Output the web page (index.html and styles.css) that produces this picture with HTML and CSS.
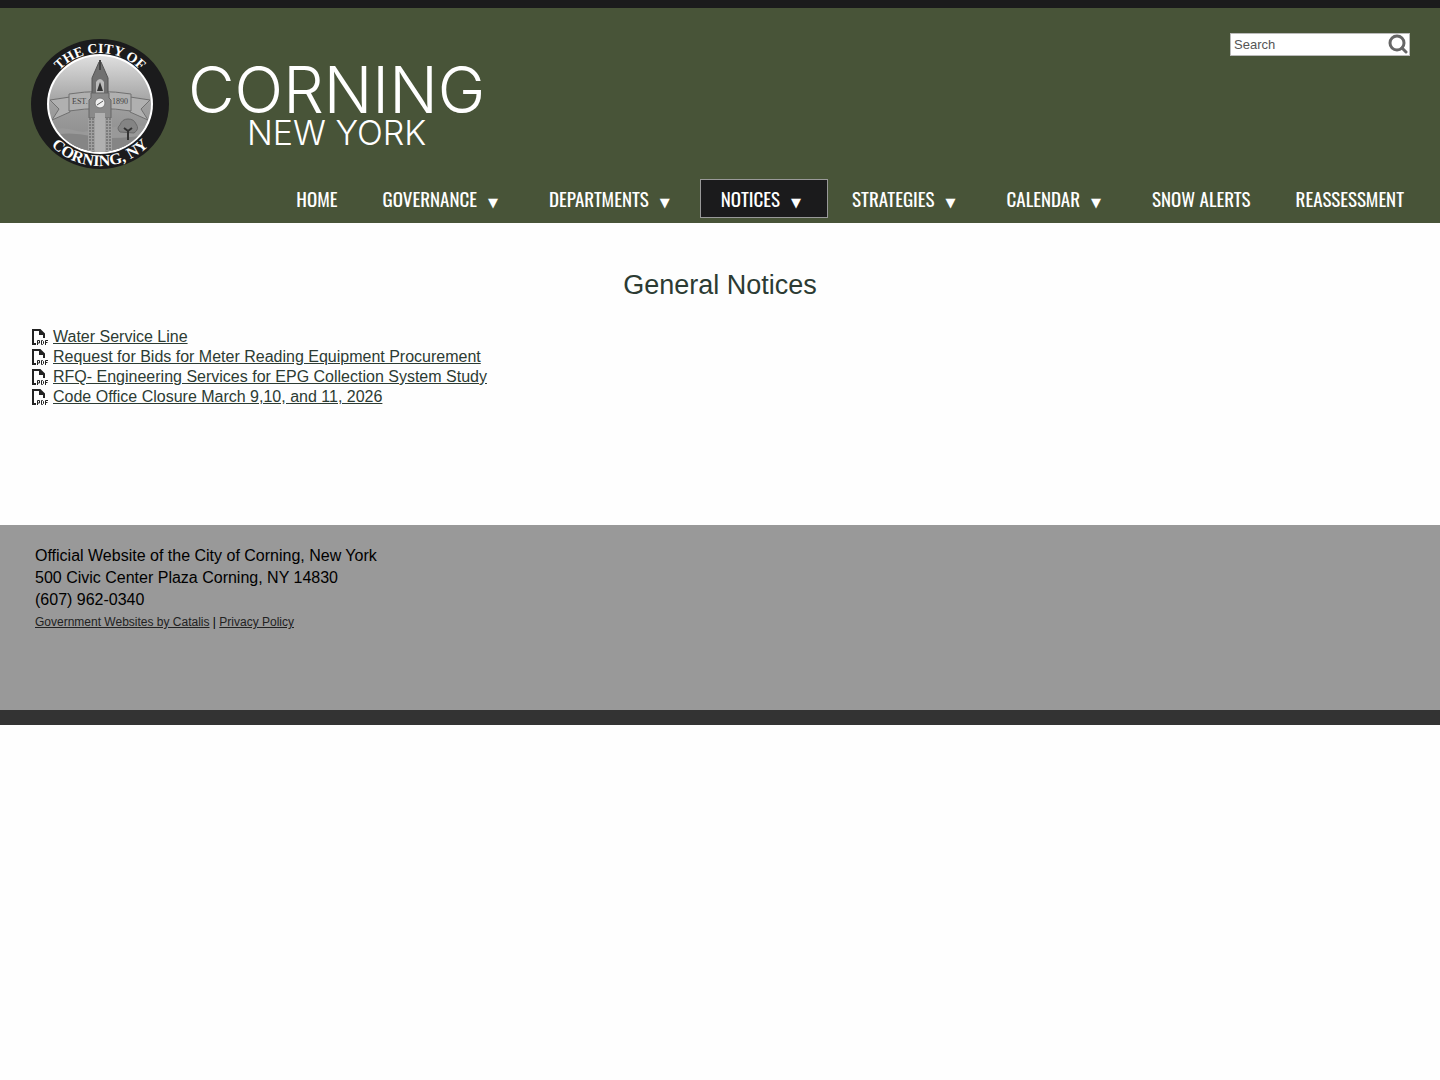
FILE: index.html
```html
<!DOCTYPE html>
<html lang="en">
<head>
  <meta charset="UTF-8">
  <meta name="viewport" content="width=device-width, initial-scale=1.0">
  <title>General Notices - City of Corning, New York</title>
  <link rel="stylesheet" href="styles.css">
</head>
<body>
  <header class="site-header">
    <div class="header-top">
      <a class="brand" href="#">
        <svg class="seal" viewBox="0 0 140 132" role="img" aria-label="Seal of the City of Corning, NY">
          <defs>
            <linearGradient id="sky" x1="0" y1="0" x2="0" y2="1">
              <stop offset="0" stop-color="#e2e2e2"/>
              <stop offset="0.5" stop-color="#a0a0a0"/>
              <stop offset="1" stop-color="#868686"/>
            </linearGradient>
            <clipPath id="disc"><ellipse cx="70" cy="66" rx="51" ry="48"/></clipPath>
            <path id="arcTop" d="M16 66a54 51 0 0 1 108 0"/>
            <path id="arcBottom" d="M4 66a66 62 0 0 0 132 0"/>
          </defs>
          <ellipse cx="70" cy="66" rx="69" ry="65" fill="#1b1b1c"/>
          <ellipse cx="70" cy="66" rx="53" ry="50" fill="#fff"/>
          <g clip-path="url(#disc)">
            <rect x="17" y="15" width="106" height="102" fill="url(#sky)"/>
            <path d="M17 93q14-5 26-1t20-1h14q26-8 46 0v30H17z" fill="#999"/>
            <path d="M17 98q22-5 44 0t62-2v24H17z" fill="#858585"/>
            <!-- ribbon -->
            <g fill="#b0b0b0" stroke="#707070" stroke-width="1">
              <path d="M20 62l20-3v15l-18 8 7-11z"/>
              <path d="M120 62l-20-3v15l18 8-7-11z"/>
              <path d="M39 56q31-5 62 0v17q-31-5-62 0z"/>
            </g>
            <!-- clock tower -->
            <path d="M62 40L69 24h2l7 16v16H62z" fill="#707070" stroke="#555"/>
            <path d="M70 22v10" stroke="#444" stroke-width="2"/>
            <path d="M66 55V44q4-6 8 0v11z" fill="#bbb"/>
            <path d="M67 53l3-9 3 9z" fill="#333"/>
            <path d="M61 55h18v5l2 2v18H59V62l2-2z" fill="#8a8a8a" stroke="#666"/>
            <path d="M58 80h24v40H58z" fill="#a0a0a0"/>
            <path d="M60 80v40M63 80v40M77 80v40M80 80v40" stroke="#7c7c7c" stroke-width="2" stroke-dasharray="2 1"/>
            <path d="M65 75h10v45H65z" fill="#b0b0b0"/>
            <circle cx="70" cy="65" r="5" fill="#eee" stroke="#777"/>
            <path d="M67 67l6-4" stroke="#555"/>
            <!-- tree -->
            <path d="M90 94q-4-4 0-7 2-6 8-6 6 0 8 5 4 5-2 9z" fill="#848484" stroke="#6a6a6a"/>
            <path d="M98 102v-9l-4-3m4 3l4-3" fill="none" stroke="#333" stroke-width="2"/>
          </g>
          <g class="seal-date">
            <text x="42" y="66">EST.</text>
            <text x="82" y="66">1890</text>
          </g>
          <g class="seal-text">
            <text><textPath href="#arcTop" startOffset="50%">THE CITY OF</textPath></text>
            <text class="seal-city"><textPath href="#arcBottom" startOffset="50%">CORNING, NY</textPath></text>
          </g>
        </svg>
        <span class="wordmark">
          <span class="wordmark-city">CORNING</span>
          <span class="wordmark-state">NEW YORK</span>
        </span>
      </a>
      <form class="search" role="search">
        <input type="text" class="search-input" placeholder="Search" aria-label="Search">
        <button type="submit" class="search-button" aria-label="Submit search">
          <svg viewBox="0 0 20 20" width="20" height="20">
            <circle cx="9" cy="9" r="7" fill="none" stroke="#666" stroke-width="3"/>
            <path d="M14 14l4 4" stroke="#666" stroke-width="3" stroke-linecap="round"/>
          </svg>
        </button>
      </form>
    </div>
    <nav class="main-nav" aria-label="Main">
      <ul>
        <li><a href="#">HOME</a></li>
        <li><a href="#" class="has-menu">GOVERNANCE <span class="arrow">▼</span></a></li>
        <li><a href="#" class="has-menu">DEPARTMENTS <span class="arrow">▼</span></a></li>
        <li><a href="#" class="has-menu active">NOTICES <span class="arrow">▼</span></a></li>
        <li><a href="#" class="has-menu">STRATEGIES <span class="arrow">▼</span></a></li>
        <li><a href="#" class="has-menu">CALENDAR <span class="arrow">▼</span></a></li>
        <li><a href="#">SNOW ALERTS</a></li>
        <li><a href="#">REASSESSMENT</a></li>
      </ul>
    </nav>
  </header>

  <svg class="sprite" aria-hidden="true">
    <symbol id="pdf" viewBox="0 0 16 16">
      <path d="M4 15H1V1h7l4 4v4" fill="none" stroke="#222" stroke-width="2"/>
      <path d="M7 1h1l4 4v1H7z" fill="#222"/>
      <path d="M5.500 16v-4.500h2v2.500h-2M9.500 11.500v4h1l1-1v-2l-1-1zM13.500 16v-4.500H16M13.500 13.500h2" fill="none" stroke="#222"/>
    </symbol>
  </svg>

  <main class="content">
    <h1>General Notices</h1>
    <ul class="notices">
      <li><svg class="pdf-icon"><use href="#pdf"/></svg><a href="#">Water Service Line</a></li>
      <li><svg class="pdf-icon"><use href="#pdf"/></svg><a href="#">Request for Bids for Meter Reading Equipment Procurement</a></li>
      <li><svg class="pdf-icon"><use href="#pdf"/></svg><a href="#">RFQ- Engineering Services for EPG Collection System Study</a></li>
      <li><svg class="pdf-icon"><use href="#pdf"/></svg><a href="#">Code Office Closure March 9,10, and 11, 2026</a></li>
    </ul>
  </main>

  <footer class="site-footer">
    <p>Official Website of the City of Corning, New York</p>
    <p>500 Civic Center Plaza Corning, NY 14830</p>
    <p>(607) 962-0340</p>
    <p class="credits"><a href="#">Government Websites by Catalis</a> | <a href="#">Privacy Policy</a></p>
  </footer>
</body>
</html>
```
FILE: styles.css
```css
* {
  box-sizing: border-box;
}
body {
  margin: 0;
  background: #fefefe;
  color: #000;
  font-family: "Liberation Sans", Arial, sans-serif;
  font-size: 16px;
}
ul {
  list-style: none;
  margin: 0;
  padding: 0;
}

/* header */
.site-header {
  background: #485438;
  border-top: 8px solid #1b1b1c;
  padding-bottom: 5px;
}
.header-top {
  display: flex;
  justify-content: space-between;
  align-items: flex-start;
  padding: 25px 30px 0;
}
.brand {
  display: flex;
  align-items: center;
  gap: 18px;
  padding-top: 5px;
  color: #fff;
  text-decoration: none;
}
.seal {
  width: 140px;
  height: 132px;
}
.seal-text {
  fill: #fff;
  font: bold 14px "Liberation Serif", serif;
  text-anchor: middle;
}
.seal-city {
  font-size: 16px;
}
.seal-date {
  fill: #444;
  font: 8px "Liberation Serif", serif;
}
.wordmark {
  display: flex;
  flex-direction: column;
  align-items: center;
  padding-top: 8px;
  font-family: Inter, "DejaVu Sans", sans-serif;
  font-weight: 300;
}
.wordmark-city {
  font-size: 64px;
  line-height: 50px;
}
.wordmark-state {
  font-size: 34px;
  line-height: 36px;
}

.search {
  display: flex;
  width: 180px;
  height: 23px;
  background: #fff;
  border: 1px solid #bbb;
}
.search-input {
  flex: 1;
  min-width: 0;
  padding: 0 3px;
  border: 0;
  background: none;
  font: 13px "Liberation Sans", Arial, sans-serif;
}
.search-input::placeholder {
  color: #555;
  opacity: 1;
}
.search-button {
  display: flex;
  padding: 0 1px 0 0;
  border: 0;
  background: none;
  cursor: pointer;
}

/* navigation */
.main-nav {
  padding: 9px 15px 0;
}
.main-nav ul {
  display: flex;
  flex-wrap: wrap;
  justify-content: flex-end;
  gap: 3px;
}
.main-nav a {
  display: flex;
  align-items: baseline;
  height: 39px;
  padding: 0 20px;
  border: 1px solid transparent;
  color: #fff;
  font-family: Oswald, "Liberation Sans Narrow", sans-serif;
  font-size: 19px;
  line-height: 36px;
  text-decoration: none;
}
.main-nav .has-menu {
  gap: 11px;
  padding-right: 26px;
}
.main-nav .active {
  background: #1b1b1c;
  border-color: #999;
}
.arrow {
  font-family: "DejaVu Sans", sans-serif;
  font-size: 13px;
}

/* page content */
.sprite {
  display: none;
}
.content {
  padding: 46px 32px 118px;
}
.content h1 {
  margin: 0 0 26px;
  color: #2c3b33;
  font-size: 27px;
  font-weight: normal;
  line-height: 32px;
  text-align: center;
}
.notices li {
  display: flex;
  align-items: center;
  gap: 5px;
  line-height: 20px;
}
.notices a {
  color: #2c3b33;
}
.pdf-icon {
  width: 16px;
  height: 16px;
}

/* footer */
.site-footer {
  padding: 20px 35px 77px;
  background: #999;
  border-bottom: 15px solid #333;
}
.site-footer p {
  margin: 0;
  line-height: 22px;
}
.site-footer .credits {
  font-size: 12px;
}
.site-footer a {
  color: #222;
}
```
